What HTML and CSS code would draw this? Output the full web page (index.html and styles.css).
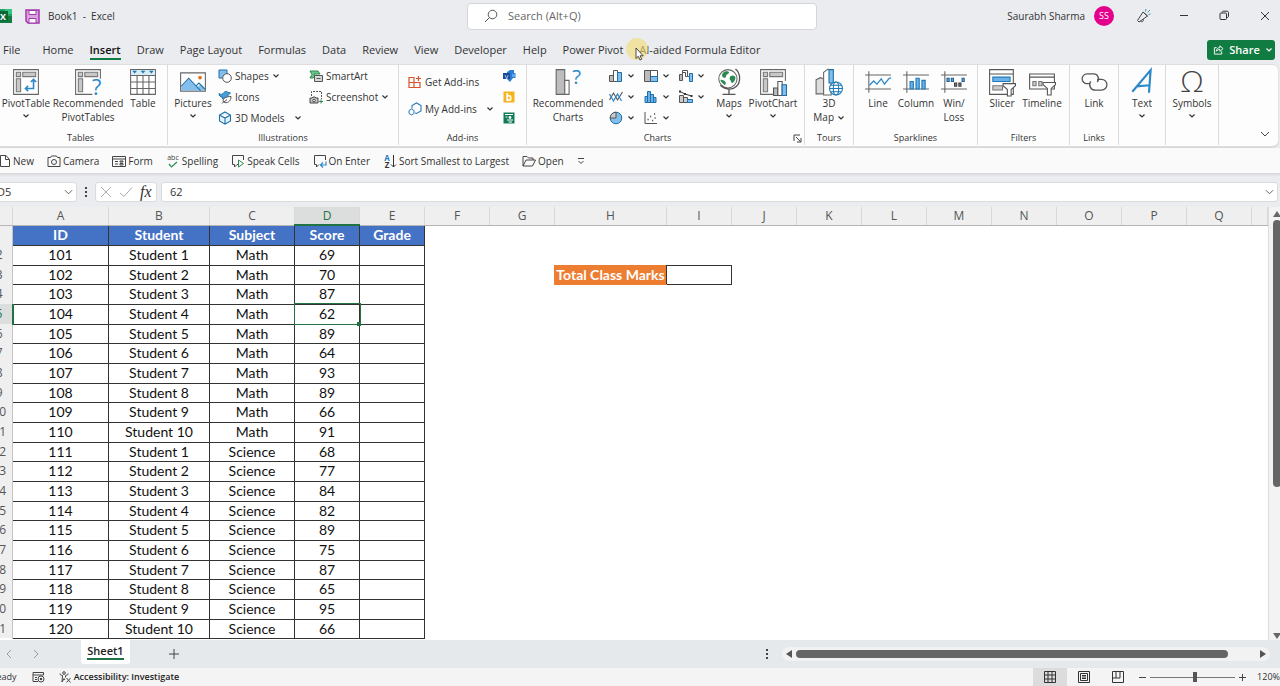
FILE: index.html
```html
<!DOCTYPE html>
<html lang="en">
<head>
<meta charset="utf-8">
<title>Book1 - Excel</title>
<link rel="stylesheet" href="styles.css">
</head>
<body>
<svg class="defs" aria-hidden="true">
  <symbol id="chev" viewBox="0 0 8 6"><path d="M1.500 1.500 4 4l2.500-2.500" fill="none" stroke="currentColor" stroke-width="1.200"/></symbol>
  <symbol id="pivot" viewBox="0 0 26 26"><path d="M1.500 1.500h23v23h-23z" fill="#fff" stroke="#666"/><path d="M4 4h4v4H4zM10 4h12v4H10zM4 10h4v12H4z" fill="#c8c8c8" stroke="#777"/></symbol>
</svg>

<header class="titlebar">
  <div class="title-left">
    <svg class="logo" viewBox="0 0 20 14"><path d="M6 0h13v14H6z" fill="#21a366"/><path d="M6 7h13v7H6z" fill="#107c41"/><path d="M12 0h7v5h-7z" fill="#33c481"/><rect x="2" y="2" width="13" height="10" fill="#0e6537"/><text x="10" y="10.500" fill="#fff" font-size="9" font-weight="700">X</text></svg>
    <svg class="save" viewBox="0 0 15 15"><path d="M1 1h13v13H3l-2-2z" fill="#dda0e0" stroke="#a03aac" stroke-width="1.500"/><path d="M4 1.500h7v4H4zM4 9.500h7V14H4z" fill="#fff" stroke="#a03aac"/></svg>
    <span>Book1&nbsp; -&nbsp; Excel</span>
  </div>
  <label class="search">
    <svg viewBox="0 0 14 14"><circle cx="8.500" cy="5.500" r="4.300" fill="none" stroke="#555"/><path d="M5.500 8.500 1 13" stroke="#555"/></svg>
    <input type="text" placeholder="Search (Alt+Q)" aria-label="Search">
  </label>
  <div class="title-right">
    <span>Saurabh Sharma</span>
    <span class="avatar">SS</span>
    <button class="win" aria-label="Coming soon"><svg viewBox="0 0 16 16"><path d="M7 4 1.500 12.500l1.500 1.500L11.500 8zM4.500 13.200c1.500 1.300 3 .3 3-1.800M7 4l4.500 4" fill="none" stroke="#444"/><path d="M9.500 3.500 10 1M11.500 4.500 14 2M12.500 6.500l2-.5" stroke="#4b8fb5"/></svg></button>
    <button class="win" aria-label="Minimize"><svg viewBox="0 0 16 16"><path d="M4 7.500h8" stroke="#333"/></svg></button>
    <button class="win" aria-label="Restore"><svg viewBox="0 0 16 16"><rect x="4" y="5" width="6.500" height="6.500" rx="1" fill="none" stroke="#333"/><path d="M6 4.500c0-1 .5-1.300 1.500-1.300H11c1 0 1.500.5 1.500 1.500V8c0 1-.5 1.500-1.500 1.500" fill="none" stroke="#333"/></svg></button>
    <button class="win" aria-label="Close"><svg viewBox="0 0 16 16"><path d="m4 4 8 8M12 4l-8 8" stroke="#333"/></svg></button>
  </div>
</header>

<nav class="tabs">
  <button class="first">File</button><button>Home</button><button class="on">Insert</button><button>Draw</button><button>Page Layout</button><button>Formulas</button><button>Data</button><button>Review</button><button>View</button><button>Developer</button><button>Help</button><button>Power Pivot</button><button>AI-aided Formula Editor</button>
  <button class="share"><svg viewBox="0 0 12 12"><path d="M4 4H1.500v7h8V8M3.500 8c.5-3 2-4 4-4V2l3.500 3-3.500 3V6c-1.500 0-3 .5-4 2z" fill="none" stroke="#fff"/></svg>Share<svg class="chev"><use href="#chev"/></svg></button>
</nav>

<section class="ribbon">
  <div class="group g-tables">
    <div class="tools">
      <button class="big w52"><svg viewBox="0 0 26 26"><use href="#pivot"/><path d="M20 11v8h-7M17.500 13 20 10.500l2.500 2.500M15 16.500 12.500 19l2.500 2.500" fill="none" stroke="#2b88c9" stroke-width="1.500"/></svg><span>PivotTable</span><svg class="chev"><use href="#chev"/></svg></button>
      <button class="big w72"><svg viewBox="0 0 26 26"><use href="#pivot"/><path d="M17 10h9v16h-9z" fill="#fdfdfd"/><text x="21" y="25" fill="#2b88c9" font-size="20">?</text></svg><span>Recommended<br>PivotTables</span></button>
      <button class="big w38"><svg viewBox="0 0 26 26"><path d="M1.500 1.500h23v23h-23z" fill="#fff" stroke="#666"/><path d="M1.500 7h23M1.500 13h23M1.500 19h23M7.500 7v17.500M13 7v17.500M18.500 7v17.500" stroke="#666"/><path d="M2 2h22v4.500H2z" fill="#d8ecf8"/><path d="M3 2.500h4.500L5.200 5zM10.800 2.500h4.500L13 5zM18.500 2.500H23L20.800 5z" fill="#1d78b5"/></svg><span>Table</span></button>
    </div>
    <div class="label">Tables</div>
  </div>

  <div class="group g-ill">
    <div class="tools">
      <button class="big w50"><svg viewBox="0 0 26 26"><path d="M1.500 4.500h23v17h-23z" fill="#fff" stroke="#666"/><path d="m2 18 7-8 8 8 3-3 4 4v2H2z" fill="#83beec"/><path d="m2 17 7-7.500 11 11.500M15.500 17l3-3 5.500 5.500" fill="none" stroke="#1d6fa8"/><circle cx="19.500" cy="9" r="1.700" fill="#e07020"/></svg><span>Pictures</span><svg class="chev"><use href="#chev"/></svg></button>
      <div class="stack w91">
        <button><svg class="ico" viewBox="0 0 14 14"><path d="M1 1h8v8H1z" fill="#83beec" stroke="#1d6fa8"/><circle cx="9" cy="9" r="4.300" fill="#fff" stroke="#555"/></svg>Shapes<svg class="chev"><use href="#chev"/></svg></button>
        <button><svg class="ico" viewBox="0 0 14 14"><path d="M1 3.500c2 1.500 3.500 1 4.500-.5S9 .5 10 2.500l2.500.5-2 1.500C9.500 8 7 9.500 4 8.500c1-.5 1-.8 1-1-3-.5-4-2-4-4z" fill="#4b9fd8" stroke="#1d6fa8"/><path d="M5.500 12c-1.500-3.500 2.500-5.500 7.500-5.500 0 5-4 7.500-7.500 5.500L4 13.500M6 12l3-2.500" fill="#fff" stroke="#555"/></svg>Icons</button>
        <button><svg class="ico" viewBox="0 0 14 14"><path d="m7 1 5.500 3v6L7 13.200 1.500 10V4zM1.500 4 7 7l5.500-3M7 7v6" fill="#e6f3fb" stroke="#1d6fa8" stroke-width="1.100"/></svg>3D Models<svg class="chev far"><use href="#chev"/></svg></button>
      </div>
      <div class="stack">
        <button><svg class="ico" viewBox="0 0 14 14"><path d="M1 2h8l2 3H5l1 2-2 2H1l2-3.500z" fill="#6cc48c" stroke="#2a8a50"/><path d="M5.500 6.500h8v6h-8z" fill="#d9d9d9" stroke="#555"/><path d="M7.500 9.500h4" stroke="#555"/></svg>SmartArt</button>
        <button><svg class="ico" viewBox="0 0 14 14"><path d="M2.500 6V1.500h10V9" fill="none" stroke="#555" stroke-dasharray="2 1"/><path d="M1 8h2l1-1h2l1 1h2v5H1z" fill="#c8c8c8" stroke="#444"/><circle cx="5" cy="10.500" r="1.300" fill="#fff" stroke="#444"/><path d="M12 9.500v4M10 11.500h4" stroke="#2a8a50"/></svg>Screenshot<svg class="chev"><use href="#chev"/></svg></button>
      </div>
    </div>
    <div class="label">Illustrations</div>
  </div>

  <div class="group g-add">
    <div class="tools">
      <div class="stack two w94">
        <button><svg class="ico" viewBox="0 0 14 14"><path d="M1 2.500h5v10H1zM1 7.500h11v5H6V7.500M10.500 1v5M8 3.500h5" fill="none" stroke="#d8532c" stroke-width="1.200"/></svg>Get Add-ins</button>
        <button><svg class="ico" viewBox="0 0 14 14"><path d="M4 6.500v-3L8.500 1 13 3.500v5.500L8.500 11.500 7 11" fill="none" stroke="#2b79b8" stroke-width="1.100"/><path d="m3.500 7 2.500 1.500v3L3.500 13 1 11.500v-3z" fill="none" stroke="#2b79b8"/></svg>My Add-ins<svg class="chev far"><use href="#chev"/></svg></button>
      </div>
      <div class="stack">
        <button aria-label="Visio Data Visualizer"><svg class="ico" viewBox="0 0 14 14"><path d="M8 1h4v3h1.500v5H11l-3 4-3-3V3z" fill="#2b7cd3"/><path d="M1 4h7v6H1z" fill="#174a9c"/><path d="M10 5h3v3h-3z" fill="#5aa7ee"/><text x="4.500" y="9.500" fill="#fff" font-size="6">V</text></svg></button>
        <button aria-label="Bing Maps"><svg class="ico" viewBox="0 0 14 14"><path d="M1.500 1.500h11v11h-11z" fill="#f5b31d"/><text x="7" y="10.500" fill="#fff" font-size="10" font-weight="700">b</text></svg></button>
        <button aria-label="People Graph"><svg class="ico" viewBox="0 0 14 14"><path d="M1.500 1.500h11v11h-11z" fill="#107c55"/><path d="M3 3.500h8" stroke="#fff"/><circle cx="8" cy="6.500" r="1.400" fill="#fff"/><path d="M3.500 6h2M5 9h6M6.500 11h3.500" stroke="#fff" stroke-width="1.200"/></svg></button>
      </div>
    </div>
    <div class="label">Add-ins</div>
  </div>

  <div class="group g-charts">
    <div class="tools">
      <button class="big w82"><svg viewBox="0 0 26 26"><path d="M2 1.500h8v23H2z" fill="#bdbdbd" stroke="#666"/><path d="M10 11.500h4v13h-4z" fill="#fff" stroke="#666"/><text x="21" y="15" fill="#2b88c9" font-size="19">?</text></svg><span>Recommended<br>Charts</span></button>
      <div class="icons">
        <button aria-label="Column chart"><svg class="ico" viewBox="0 0 14 14"><path d="M.5 6.500h4v6h-4z" fill="#bbb" stroke="#555"/><path d="M4.500 1.500h4v11h-4z" fill="#fff" stroke="#555"/><path d="M8.500 3.500h4v9h-4z" fill="#83beec" stroke="#1d6fa8"/></svg><svg class="chev"><use href="#chev"/></svg></button>
        <button aria-label="Hierarchy chart"><svg class="ico" viewBox="0 0 14 14"><path d="M.5 1.500h13v11H.5z" fill="#fff" stroke="#555"/><path d="M1 2h5v10H1z" fill="#bbb"/><path d="M6.500 7.500h7v5h-7z" fill="#83beec" stroke="#1d6fa8"/><path d="M6.500 2v10" stroke="#555"/></svg><svg class="chev"><use href="#chev"/></svg></button>
        <button aria-label="Waterfall chart"><svg class="ico" viewBox="0 0 14 14"><path d="M.5 5.500h3v6h-3z" fill="#bbb" stroke="#555"/><path d="M3.500 5.500v-4h5v6h-2v-4h-3" fill="#fff" stroke="#555"/><path d="M8.500 7.500h2v5h3v-8h-3v3" fill="#83beec" stroke="#1d6fa8"/></svg><svg class="chev"><use href="#chev"/></svg></button>
        <button aria-label="Line chart"><svg class="ico" viewBox="0 0 14 14"><path d="m.5 10 4-7 4 7 5-8" fill="none" stroke="#555" stroke-width="1.100"/><path d="m.5 4 4 7 4-7 4 7" fill="none" stroke="#2b88c9" stroke-width="1.200"/></svg><svg class="chev"><use href="#chev"/></svg></button>
        <button aria-label="Statistic chart"><svg class="ico" viewBox="0 0 14 14"><path d="M1 6.500h2.500v6H1zM3.500 1.500h3v11h-3zM6.500 4.500h3v8h-3zM9.500 7.500H12v5H9.500z" fill="#6bb2ea" stroke="#1d6fa8"/></svg><svg class="chev"><use href="#chev"/></svg></button>
        <button aria-label="Combo chart"><svg class="ico" viewBox="0 0 14 14"><path d="M.5 5.500h4v7h-4zM4.500 7.500h4v5h-4z" fill="#ccc" stroke="#555"/><path d="M8.500 9.500h5v3h-5z" fill="#83beec" stroke="#1d6fa8"/><path d="m1 1.500 5 2.500 6.500 2" stroke="#333" fill="none"/><path d="M0 .5h2v2H0zM5 3h2v2H5zM11.500 5h2v2h-2z" fill="#333"/></svg><svg class="chev"><use href="#chev"/></svg></button>
        <button aria-label="Pie chart"><svg class="ico" viewBox="0 0 14 14"><circle cx="7" cy="7" r="5.800" fill="#83beec" stroke="#1d6fa8"/><path d="M7 7V1.200A5.800 5.800 0 0 0 1.200 7z" fill="#ccc" stroke="#555"/></svg><svg class="chev"><use href="#chev"/></svg></button>
        <button aria-label="Scatter chart"><svg class="ico" viewBox="0 0 14 14"><path d="M1 1v11.500h12" fill="none" stroke="#555"/><path d="M3.500 8.500h1.200M6 5.500h1.200M8 9.500h1.200M10 3h1.200M10.500 7h1.200" stroke="#555" stroke-width="1.300"/></svg><svg class="chev"><use href="#chev"/></svg></button>
      </div>
      <button class="big w30"><svg viewBox="0 0 26 26"><circle cx="12" cy="10" r="8.500" fill="#fff" stroke="#666"/><path d="M7 5c2-3 6-2 6-1s-1 2-2 2 0 3-2 3-3-2-2-4zM14 8c2-2 5-1 5 1s-2 5-3 5-1-2-2-3 0-2 0-3zM5 11c2 0 5 1 5 3s-1 2-2 1-3-2-3-4z" fill="#2a8a50"/><path d="M19 1c5 4 5 12 1 16-4 4-11 3-15-1M13 20v4M7 24.500h12" fill="none" stroke="#555" stroke-width="1.200"/></svg><span>Maps</span><svg class="chev"><use href="#chev"/></svg></button>
      <button class="big w58"><svg viewBox="0 0 26 26"><use href="#pivot"/><path d="M13 12h13v14H13z" fill="#fdfdfd"/><path d="M13.500 18.500h4v7h-4z" fill="#bbb" stroke="#555"/><path d="M17.500 12.500h4v13h-4z" fill="#fff" stroke="#555"/><path d="M21.500 15.500h4v10h-4z" fill="#83beec" stroke="#1d6fa8"/></svg><span>PivotChart</span><svg class="chev"><use href="#chev"/></svg></button>
    </div>
    <div class="label">Charts</div>
    <button class="launcher" aria-label="Chart options"><svg viewBox="0 0 9 9"><path d="M1 7V1h6M3 3l4.500 4.500M8 4v4H4" fill="none" stroke="#444"/></svg></button>
  </div>

  <div class="group g-tours">
    <div class="tools">
      <button class="big w49"><svg viewBox="0 0 26 26"><path d="m1 11 4-2 3 1v14H1z" fill="#ddd" stroke="#666"/><path d="m8 4 4-3 3 2v22H8z" fill="#fff" stroke="#666"/><path d="M13 1.500h4V14h-4z" fill="#83beec" stroke="#1d6fa8"/><circle cx="19.500" cy="19" r="6" fill="#fff" stroke="#1d78b5"/><ellipse cx="19.500" cy="19" rx="2.500" ry="6" fill="none" stroke="#1d78b5"/><path d="M13.500 19h12M14.500 16h10M14.500 22h10" stroke="#1d78b5"/></svg><span>3D<br>Map <svg class="chev"><use href="#chev"/></svg></span></button>
    </div>
    <div class="label">Tours</div>
  </div>

  <div class="group g-spark">
    <div class="tools">
      <button class="big w38"><svg viewBox="0 0 26 26"><path d="M1 6.500h24M1 19.500h24M4.500 3v20" stroke="#666"/><path d="m5 16 4-4 3 3 4-5 3 5 4-5 2-1" fill="none" stroke="#2b88c9" stroke-width="1.200"/></svg><span>Line</span></button>
      <button class="big w38"><svg viewBox="0 0 26 26"><path d="M1 6.500h24M1 19.500h24M4.500 3v20" stroke="#666"/><path d="M7.500 12.500h3v7h-3zM13 9.500h3v10h-3zM18.500 11.500h3v8h-3z" fill="#6bb2ea" stroke="#1d78b5"/></svg><span>Column</span></button>
      <button class="big w38"><svg viewBox="0 0 26 26"><path d="M1 6.500h24M1 19.500h24M4.500 3v20" stroke="#666"/><path d="M6.500 9.500h2v3h-2zM10.500 9.500h2v3h-2zM20.500 9.500h2v3h-2z" fill="#6bb2ea" stroke="#1d5f95"/><path d="M13.500 14h2v3h-2zM17.500 14h2v3h-2z" fill="#777" stroke="#444"/></svg><span>Win/<br>Loss</span></button>
    </div>
    <div class="label">Sparklines</div>
  </div>

  <div class="group g-filters">
    <div class="tools">
      <button class="big w38"><svg viewBox="0 0 26 26"><path d="M1.500 1.500h22v23h-22zM1.500 5.500h22" fill="#fff" stroke="#555"/><path d="M4.500 8.500h16v4h-16z" fill="#6bb2ea" stroke="#1d78b5"/><path d="M4.500 16.500h9v4h-9z" fill="#ccc" stroke="#777"/><path d="M14 14.500h11.500v2L21.500 20v6h-3.500v-6L14 16.500z" fill="#fff" stroke="#555"/></svg><span>Slicer</span></button>
      <button class="big w42"><svg viewBox="0 0 26 26"><path d="M1.500 5.500h23v14h-23zM1.500 8.500h23" fill="#fff" stroke="#555"/><path d="M4.500 12.500h3v4h-3zM10 12.500h3v4h-3z" fill="#ccc" stroke="#777"/><path d="M14 13.500h11.500v2L21.500 19v6h-3.500v-6L14 15.500z" fill="#fff" stroke="#555"/></svg><span>Timeline</span></button>
    </div>
    <div class="label">Filters</div>
  </div>

  <div class="group g-links">
    <div class="tools"><button class="big w49"><svg viewBox="0 0 26 26"><g fill="none" stroke="#555" stroke-width="1.200"><path d="M9 14.500H6.500a4.500 4.500 0 0 1 0-9h6a4.500 4.500 0 0 1 3.500 7.500"/><path d="M16 10.500h4a5 5 0 0 1 0 10h-6a5 5 0 0 1-4-8"/></g></svg><span>Link</span></button></div>
    <div class="label">Links</div>
  </div>
  <div class="group g-text">
    <div class="tools"><button class="big w47"><svg viewBox="0 0 26 26"><path d="M4 22 21 2l-1.500 21M8 17l12-1" fill="none" stroke="#2b88c9" stroke-width="2"/></svg><span>Text</span><svg class="chev"><use href="#chev"/></svg></button></div>
  </div>
  <div class="group g-sym">
    <div class="tools"><button class="big w53"><svg viewBox="0 0 26 26"><text x="13" y="22" fill="#444" font-size="28" font-weight="300">Ω</text></svg><span>Symbols</span><svg class="chev"><use href="#chev"/></svg></button></div>
  </div>
  <button class="collapse" aria-label="Collapse ribbon"><svg viewBox="0 0 10 6"><path d="m1 1 4 4 4-4" fill="none" stroke="#444"/></svg></button>
</section>

<div class="quick">
  <button><svg class="ico" viewBox="0 0 14 14"><path d="M3.500 1.500h5.500l3.500 4v7h-9zM8.500 1.500v4H12" fill="#fff" stroke="#444"/></svg>New</button>
  <button><svg class="ico" viewBox="0 0 14 14"><path d="M1 3.500h2.500l1-1.500h5l1 1.500H13v9H1z" fill="none" stroke="#444"/><circle cx="7" cy="8" r="2.500" fill="none" stroke="#444"/></svg>Camera</button>
  <button><svg class="ico" viewBox="0 0 14 14"><path d="M.5 2.500h13v10H.5zM.5 5h13M3 7.500h3M3 10h3" fill="none" stroke="#444"/><path d="M8 7h3v1H8zM8 9.500h3v1.500H8z" fill="none" stroke="#444"/></svg>Form</button>
  <button><svg class="ico" viewBox="0 0 14 14"><text x="7" y="6" fill="#444" font-size="7">abc</text><path d="m3 10 2.500 3L11 8" fill="none" stroke="#2a8a50" stroke-width="1.200"/></svg>Spelling</button>
  <button><svg class="ico" viewBox="0 0 14 14"><path d="M7 10.500H6L3.500 13v-2.500h-2v-9h11V6" fill="none" stroke="#444"/><path d="m7.500 6 5 3.500-5 3.500z" fill="#fff" stroke="#2a8a50"/></svg>Speak Cells</button>
  <button><svg class="ico" viewBox="0 0 14 14"><path d="M6 10.500 3.500 13v-2.500h-2v-9h11V6" fill="none" stroke="#444"/><path d="M13 7.500V11H7.500M10 8.500 7.500 11l2.500 2.500" fill="none" stroke="#2b88c9" stroke-width="1.200"/></svg>On Enter</button>
  <button><svg class="ico" viewBox="0 0 14 14"><text x="4" y="6.500" fill="#2b79b8" font-size="8" font-weight="700">A</text><text x="4" y="14" fill="#333" font-size="8" font-weight="700">Z</text><path d="M10.500 1v12M8 10.500l2.500 2.500 2.500-2.500" fill="none" stroke="#333"/></svg>Sort Smallest to Largest</button>
  <button><svg class="ico" viewBox="0 0 14 14"><path d="M1 12V2.500h4L6.500 4H11v2M1 12l3-6h9.500l-3 6z" fill="none" stroke="#444"/></svg>Open</button>
  <button aria-label="Customize"><svg class="more" viewBox="0 0 8 8"><path d="M1 1.500h6M1.500 4 4 6.500 6.500 4" fill="none" stroke="#444"/></svg></button>
</div>

<div class="formula">
  <div class="namebox"><input type="text" value="D5" aria-label="Name box"><svg viewBox="0 0 10 6"><path d="m1 1 4 4 4-4" fill="none" stroke="#555"/></svg></div>
  <svg class="dots" viewBox="0 0 2 10"><path d="M0 0h2v2H0zM0 4h2v2H0zM0 8h2v2H0z" fill="#444"/></svg>
  <div class="fx">
    <button aria-label="Cancel"><svg viewBox="0 0 12 12"><path d="m1 1 10 10M11 1 1 11" stroke="#aaa"/></svg></button>
    <button aria-label="Enter"><svg viewBox="0 0 12 12"><path d="m0 7 4 3.500L12 1.500" fill="none" stroke="#aaa"/></svg></button>
    <button class="fn">fx</button>
  </div>
  <div class="entry"><input type="text" value="62" aria-label="Formula bar"><svg viewBox="0 0 10 6"><path d="m1 1 4 4 4-4" fill="none" stroke="#555"/></svg></div>
</div>

<main class="sheet">
  <table>
    <colgroup><col class="c-row"><col class="c-a"><col class="c-b"><col class="c-c"><col class="c-n"><col class="c-n"><col class="c-n"><col class="c-n"><col class="c-h"><col class="c-n"><col class="c-n"><col class="c-n"><col class="c-n"><col class="c-n"><col class="c-n"><col class="c-n"><col class="c-n"><col class="c-n"><col></colgroup>
    <thead><tr><th></th><th>A</th><th>B</th><th>C</th><th class="sel">D</th><th>E</th><th>F</th><th>G</th><th>H</th><th>I</th><th>J</th><th>K</th><th>L</th><th>M</th><th>N</th><th>O</th><th>P</th><th>Q</th><th></th></tr></thead>
    <tbody>
      <tr class="head"><th></th><td>ID</td><td>Student</td><td>Subject</td><td>Score</td><td>Grade</td></tr>
      <tr><th>2</th><td>101</td><td>Student 1</td><td>Math</td><td>69</td><td></td></tr>
      <tr><th>3</th><td>102</td><td>Student 2</td><td>Math</td><td>70</td><td></td><td class="none"></td><td class="none"></td><td class="total">Total Class Marks</td><td></td></tr>
      <tr><th>4</th><td>103</td><td>Student 3</td><td>Math</td><td>87</td><td></td></tr>
      <tr><th class="sel">5</th><td>104</td><td>Student 4</td><td>Math</td><td class="active">62</td><td></td></tr>
      <tr><th>6</th><td>105</td><td>Student 5</td><td>Math</td><td>89</td><td></td></tr>
      <tr><th>7</th><td>106</td><td>Student 6</td><td>Math</td><td>64</td><td></td></tr>
      <tr><th>8</th><td>107</td><td>Student 7</td><td>Math</td><td>93</td><td></td></tr>
      <tr><th>9</th><td>108</td><td>Student 8</td><td>Math</td><td>89</td><td></td></tr>
      <tr><th>10</th><td>109</td><td>Student 9</td><td>Math</td><td>66</td><td></td></tr>
      <tr><th>11</th><td>110</td><td>Student 10</td><td>Math</td><td>91</td><td></td></tr>
      <tr><th>12</th><td>111</td><td>Student 1</td><td>Science</td><td>68</td><td></td></tr>
      <tr><th>13</th><td>112</td><td>Student 2</td><td>Science</td><td>77</td><td></td></tr>
      <tr><th>14</th><td>113</td><td>Student 3</td><td>Science</td><td>84</td><td></td></tr>
      <tr><th>15</th><td>114</td><td>Student 4</td><td>Science</td><td>82</td><td></td></tr>
      <tr><th>16</th><td>115</td><td>Student 5</td><td>Science</td><td>89</td><td></td></tr>
      <tr><th>17</th><td>116</td><td>Student 6</td><td>Science</td><td>75</td><td></td></tr>
      <tr><th>18</th><td>117</td><td>Student 7</td><td>Science</td><td>87</td><td></td></tr>
      <tr><th>19</th><td>118</td><td>Student 8</td><td>Science</td><td>65</td><td></td></tr>
      <tr><th>20</th><td>119</td><td>Student 9</td><td>Science</td><td>95</td><td></td></tr>
      <tr><th>21</th><td>120</td><td>Student 10</td><td>Science</td><td>66</td><td></td></tr>
    </tbody>
  </table>
  <div class="vscroll">
    <svg class="arrow" viewBox="0 0 8 8"><path d="M0 7 4 1l4 6z" fill="#666"/></svg>
    <div class="vthumb"></div>
    <svg class="arrow" viewBox="0 0 8 8"><path d="M0 1l4 6 4-6z" fill="#666"/></svg>
  </div>
</main>

<footer class="sheetbar">
  <button class="nav" aria-label="Previous sheet"><svg viewBox="0 0 6 8"><path d="M5 0 1 4l4 4" fill="none" stroke="#999"/></svg></button>
  <button class="nav" aria-label="Next sheet"><svg viewBox="0 0 6 8"><path d="m1 0 4 4-4 4" fill="none" stroke="#999"/></svg></button>
  <button class="sheettab"><span>Sheet1</span></button>
  <button class="add" aria-label="New sheet"><svg viewBox="0 0 10 10"><path d="M5 0v10M0 5h10" stroke="#444"/></svg></button>
  <svg class="dots" viewBox="0 0 2 10"><path d="M0 0h2v2H0zM0 4h2v2H0zM0 8h2v2H0z" fill="#444"/></svg>
  <div class="hscroll">
    <svg class="arrow" viewBox="0 0 8 8"><path d="M7 0 1 4l6 4z" fill="#555"/></svg>
    <div class="htrack"><div class="hthumb"></div></div>
    <svg class="arrow" viewBox="0 0 8 8"><path d="m1 0 6 4-6 4z" fill="#555"/></svg>
  </div>
</footer>

<footer class="status">
  <span class="ready">Ready</span>
  <svg class="macro" viewBox="0 0 13 12"><path d="M6 10.500H1v-9h10.500V4M1 4h10.500M3 6.500h2M3 8.500h2" fill="none" stroke="#444"/><circle cx="9" cy="8" r="3" fill="#fff" stroke="#444"/><circle cx="9" cy="8" r="1.300" fill="#444"/></svg>
  <button class="access"><svg viewBox="0 0 12 12"><circle cx="5" cy="2" r="1.300" fill="none" stroke="#444"/><path d="M1 2.500c-.5 1 .5 1.500 2.500 2L3 11l2-3.500L6 9M9 2.500c.5 1-.5 1.500-2.500 2v2M7.500 7l4 4.500M11.500 7l-4 4.500" fill="none" stroke="#444"/></svg>Accessibility: Investigate</button>
  <button class="view on" aria-label="Normal"><svg viewBox="0 0 12 12"><path d="M.5.5h11v11H.5zM4 .5v11M8 .5v11M.5 4h11M.5 8h11" fill="none" stroke="#333"/></svg></button>
  <button class="view" aria-label="Page layout"><svg viewBox="0 0 12 12"><path d="M.5.5h11v11H.5zM2.500 2.500h7v7h-7zM4 4.500h4M4 6h4M4 7.500h4" fill="none" stroke="#333"/></svg></button>
  <button class="view" aria-label="Page break preview"><svg viewBox="0 0 12 12"><path d="M.5.500h11v11H.5zM4 .5V7M8 .5V7M.5 7h7.500" fill="none" stroke="#333"/></svg></button>
  <div class="zoom">
    <button aria-label="Zoom out"><svg viewBox="0 0 7 7"><path d="M0 3.500h7" stroke="#444"/></svg></button>
    <input type="range" min="0" max="100" value="53" aria-label="Zoom">
    <button aria-label="Zoom in"><svg viewBox="0 0 7 7"><path d="M0 3.500h7M3.500 0v7" stroke="#444"/></svg></button>
    <span>120%</span>
  </div>
</footer>

<div class="halo"></div>
<svg class="pointer" viewBox="0 0 9 14"><path d="M1 1v10.500l2.300-2.200 1.700 3.700 1.700-.8L5 8.800h3.200z" fill="#fff" stroke="#333" stroke-width=".9"/></svg>
</body>
</html>
```
FILE: styles.css
```css
* { box-sizing: border-box; }
body {
  margin: 0;
  height: 100vh;
  display: flex;
  flex-direction: column;
  overflow: hidden;
  background: #eaecef;
  color: #333;
  font: 11px/14px "Open Sans", "Noto Sans", sans-serif;
}
button, input { font: inherit; color: inherit; border: 0; background: none; padding: 0; margin: 0; outline: 0; min-width: 0; }
button { display: flex; align-items: center; white-space: nowrap; }
svg { flex: none; display: block; overflow: visible; }
svg text { text-anchor: middle; }
.defs { position: absolute; width: 0; height: 0; }
.chev { width: 8px; height: 6px; color: #333; }
.ico { width: 14px; height: 14px; }

.titlebar { display: grid; grid-template-columns: 1fr 350px 1fr; height: 32px; padding-left: 4px; align-items: center; }
.title-left { display: flex; align-items: center; gap: 8px; }
.title-left span { font-size: 10px; }
.logo { width: 20px; height: 14px; margin-left: -11px; }
.save { width: 15px; height: 15px; margin: 0 0 0 4px; }
.search { display: flex; align-items: center; height: 27px; padding-left: 16px; gap: 10px; background: #fff; border: 1px solid #d4d6d8; border-radius: 4px; color: #666; }
.search svg { width: 14px; height: 14px; }
.search input { flex: 1; }
.search input::placeholder { color: #666; opacity: 1; }
.title-right { display: flex; justify-content: flex-end; align-items: center; font-size: 10px; }
.avatar { width: 20px; height: 20px; margin: 0 10px 0 9px; border-radius: 50%; background: #e3008c; color: #fff; font-size: 9px; line-height: 20px; text-align: center; }
.win { width: 40px; height: 20px; justify-content: center; }
.win:last-child { width: 30px; margin-left: 6px; }
.win svg { width: 16px; height: 16px; }

.tabs { display: flex; height: 32px; padding: 3px 5px 0 3px; gap: 16px; align-items: center; }
.tabs button { height: 20px; border-bottom: 2px solid transparent; border-top: 2px solid transparent; }
.tabs .first { margin-right: 6px; }
.tabs .on { font-weight: 600; color: #111; border-bottom-color: #107c41; }
.tabs .share { margin-left: auto; width: 68px; height: 20px; padding: 0 2px 0 6px; gap: 3px; justify-content: space-between; border: 0; border-radius: 3px; background: #107c41; color: #fff; font-weight: 600; }
.share > svg:first-child { width: 11px; height: 11px; }
.share .chev { color: #fff; }

.ribbon { display: flex; height: 83px; margin-right: 2px; background: #fdfdfd; border: solid #dcdddf; border-width: 1px 0; border-radius: 0 6px 6px 0; box-shadow: 0 1px 2px #d0d1d3; font-size: 10px; }
.group { position: relative; display: flex; flex-direction: column; margin-bottom: 1px; border-right: 1px solid #dcdcdc; }
.tools { flex: 1; display: flex; }
.label { height: 14px; font-size: 9px; text-align: center; }
.g-tables { width: 168px; }
.g-tables .label { padding-right: 6px; }
.g-ill { width: 231px; }
.g-add { width: 128px; }
.g-add .tools { padding-left: 9px; }
.g-charts { width: 278px; }
.g-charts .label { padding-right: 16px; }
.g-tours, .g-links { width: 49px; }
.g-spark { width: 124px; }
.g-spark .tools, .g-filters .tools { padding-left: 5px; }
.g-filters { width: 92px; }
.g-text { width: 47px; }
.g-sym { width: 53px; }
.big { flex-direction: column; align-self: flex-start; text-align: center; }
.big > svg:first-child { width: 28px; height: 28px; margin: 3px 0 0; }
.big > .chev { margin-top: 3px; }
.big span .chev { display: inline-block; }
.w30 { width: 30px; } .w38 { width: 38px; } .w42 { width: 42px; } .w47 { width: 47px; } .w49 { width: 49px; }
.w50 { width: 50px; } .w52 { width: 52px; } .w53 { width: 53px; } .w58 { width: 58px; } .w72 { width: 72px; }
.w82 { width: 82px; } .w91 { width: 91px; } .w94 { width: 94px; }
.stack { display: grid; grid-template-rows: repeat(3, 1fr); height: 64px; }
.stack button { gap: 3px; }
.stack.two { grid-template-rows: 1fr 1fr; padding: 3px 0 7px; }
.stack .far { margin-left: 6px; }
.icons { display: grid; grid-template-columns: repeat(3, 35px); grid-template-rows: repeat(3, 1fr); height: 64px; }
.icons button { gap: 4px; }
.launcher { position: absolute; right: 2px; bottom: 2px; }
.launcher svg { width: 9px; height: 9px; }
.collapse { margin: auto 8px 9px auto; }
.collapse svg { width: 10px; height: 6px; }

.quick { display: flex; align-items: center; height: 26px; margin-top: 1px; gap: 13px; background: #fafafa; border-bottom: 1px solid #d8d9db; box-shadow: 0 1px 2px #d8d9db; font-size: 10px; }
.quick button { gap: 2px; }
.quick button:first-child { margin-left: -3px; }
.more { width: 8px; height: 8px; }

.formula { display: flex; align-items: center; height: 21px; margin: 7px 2px 5px -6px; font-size: 11px; }
.namebox, .fx, .entry { display: flex; align-items: center; height: 20px; background: #fff; border: 1px solid #dadbdd; border-radius: 3px; }
.formula > div > svg { width: 9px; height: 6px; }
.namebox { width: 83px; padding: 0 3px 0 2px; }
.namebox input, .entry input { flex: 1; }
.dots { width: 2px; height: 10px; }
.formula .dots { margin: 0 8px; }
.fx { width: 62px; gap: 8px; padding-left: 4px; }
.fx svg { width: 12px; height: 12px; }
.fn { font: italic 16px "Liberation Serif", serif; }
.entry { flex: 1; margin-left: 4px; padding: 0 3px 0 8px; }

.sheet { flex: 1; display: flex; align-items: stretch; min-height: 0; overflow: hidden; background: #fff; }
table { flex: 1; align-self: flex-start; width: 0; margin-left: -14px; table-layout: fixed; border-collapse: collapse; font-family: Lato, sans-serif; font-size: 14px; line-height: 16px; color: #111; text-align: center; }
.c-row { width: 26px; } .c-a { width: 96px; } .c-b { width: 101px; } .c-c { width: 85px; } .c-n { width: 65px; } .c-h { width: 112px; }
th, td { padding: 0; height: 20px; white-space: nowrap; }
tbody tr:nth-child(3n) > * { height: 19px; }
th { font-family: "Open Sans", sans-serif; font-weight: 400; font-size: 12px; color: #555; background: #efefef; }
thead th { height: 18px; padding-top: 1px; border: solid #d8d8d8; border-width: 0 1px 1px; border-bottom-color: #b5b5b5; }
thead .sel { background: #dcdedd; color: #217346; border-bottom: 2px solid #217346; }
tbody th { border-right: 1px solid #c4c4c4; }
tbody .sel { background: #dcdedd; color: #217346; border-right: 2px solid #217346; }
td { border: 1px solid #333; }
.none { border-width: 0; }
.head td { background: #4472c4; color: #fff; font-weight: 700; }
.total { background: #ed7d31; color: #fff; font-weight: 700; border-color: #ed7d31 #333 #ed7d31 #ed7d31; }
.active { position: relative; outline: 1px solid #217346; }
.active::after { content: ""; position: absolute; right: -2px; bottom: -2px; width: 4px; height: 4px; background: #217346; }
.vscroll { width: 12px; display: flex; flex-direction: column; align-items: center; padding: 3px 0 0 4px; border-left: 1px solid #ddd; background: #f3f3f3; }
.arrow { width: 8px; height: 8px; }
.vthumb { width: 8px; height: 62%; margin: 2px 0 auto; border-radius: 4px; background: #666; }

.sheetbar { display: flex; align-items: center; height: 28px; background: #e6e9ec; }
.nav { width: 27px; padding-left: 6px; }
.nav svg { width: 6px; height: 8px; }
.sheettab { align-self: flex-start; width: 49px; height: 24px; margin-left: 27px; justify-content: center; background: #fff; border-radius: 0 0 3px 3px; font-size: 11px; font-weight: 600; color: #222; }
.sheettab span { border-bottom: 2px solid #217346; }
.add { margin-left: 39px; }
.add svg { width: 10px; height: 10px; }
.sheetbar .dots { margin-left: auto; }
.hscroll { display: flex; align-items: center; gap: 3px; width: 488px; height: 14px; margin: 0 10px 0 14px; padding: 0 3px; border-radius: 7px; background: #f2f2f2; }
.htrack { flex: 1; }
.hthumb { width: 94%; height: 8px; border-radius: 4px; background: #666; }

.status { display: flex; align-items: center; height: 18px; background: #f4f4f4; font-size: 9px; }
.ready { margin-left: -9px; }
.macro { width: 13px; height: 12px; margin: 0 14px 0 15px; }
.access { gap: 3px; font-weight: 600; color: #222; margin-right: auto; }
.access svg { width: 12px; height: 12px; }
.view { width: 34px; height: 18px; justify-content: center; }
.view.on { background: #dcdcdc; }
.view svg { width: 12px; height: 12px; }
.zoom { display: flex; align-items: center; gap: 4px; margin-left: 4px; }
.zoom svg { width: 7px; height: 7px; }
.zoom input { appearance: none; width: 85px; height: 10px; background: linear-gradient(#777, #777) center / 100% 1px no-repeat; }
.zoom input::-webkit-slider-thumb { appearance: none; width: 4px; height: 10px; background: #555; }
.zoom span { margin-left: 7px; }

.halo { position: absolute; left: 626px; top: 38px; width: 22px; height: 22px; border-radius: 50%; background: #f3dc6e; opacity: .6; }
.pointer { position: absolute; left: 635px; top: 47px; width: 9px; height: 14px; }
```
